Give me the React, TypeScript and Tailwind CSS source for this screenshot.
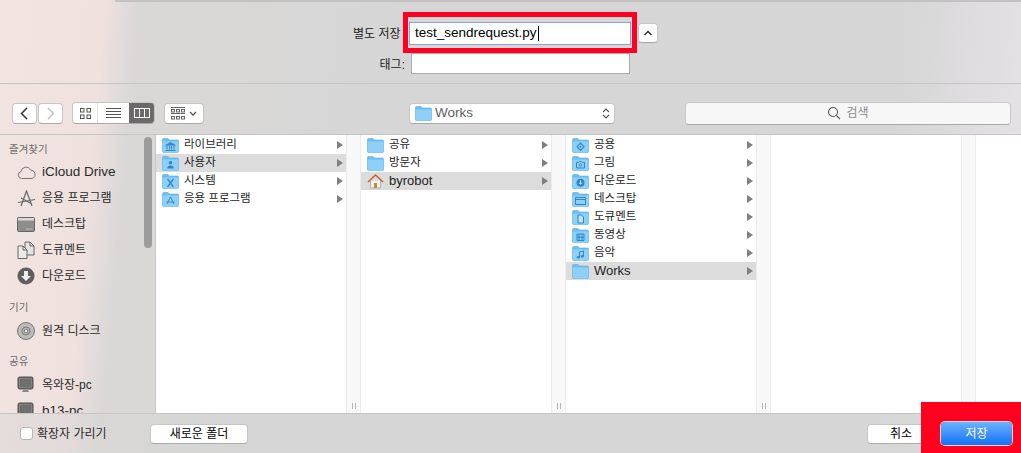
import { ReactNode } from 'react'

const FONT = "font-['Helvetica_Neue','Liberation_Sans','Noto_Sans_CJK_KR',sans-serif]"

function Chevron() {
  return <div className="ml-auto h-0 w-0 border-y-[4px] border-l-[6px] border-y-transparent border-l-[#7f7f7f]" />
}

function Folder({ glyph }: { glyph?: ReactNode }) {
  return (
    <svg width="17" height="15" viewBox="0 0 17 15" className="shrink-0">
      <path d="M.5 1.5Q.5.5 1.5.5h4.5l1.500 1.500h8q1 0 1 1v10.500q0 1-1 1h-14q-1 0-1-1z" fill="#6dbdf0" stroke="#5aaee6" strokeWidth=".6" />
      <path d="M.8 3.5h15.400v10.200q0 .8-.8.8h-13.800q-.8 0-.8-.8z" fill="#8fd0f8" />
      {glyph}
    </svg>
  )
}

const g = '#2f86c9'
const glyphs: Record<string, ReactNode> = {
  library: (
    <g stroke={g} fill="none">
      <path d="M3.500 7.200l5-2.700 5 2.700z" fill={g} strokeWidth=".6" />
      <path d="M5 8v3.500M7.500 8v3.500M9.500 8v3.500M12 8v3.500" strokeWidth="1" />
      <path d="M3.500 12.500h10" strokeWidth="1" />
    </g>
  ),
  user: <path d="M8.500 5a1.800 1.800 0 0 1 0 3.600a1.800 1.800 0 0 1 0-3.600zM5 12.500q.5-3 3.500-3t3.500 3z" fill={g} />,
  x: <path d="M5.500 5l6 8M11.500 5l-6 8" stroke={g} strokeWidth="1.300" fill="none" />,
  app: <path d="M5 12l3.500-7 3.500 7M4.500 10h8" stroke={g} strokeWidth=".9" fill="none" />,
  public: <path d="M8.500 5l3.500 3.700-3.500 3.700-3.500-3.700zM8.500 7.500v2M7.500 8.700h2" stroke={g} strokeWidth="1.100" fill="none" />,
  photo: <path d="M4.500 6.500h2l1-1h2l1 1h2v5.500h-8zM8.500 7.700a1.300 1.300 0 1 0 .01 0" stroke={g} strokeWidth="1" fill="none" />,
  down: (
    <g>
      <circle cx="8.500" cy="8.800" r="4" fill={g} />
      <path d="M8.500 6.300v3.700M6.900 8.600l1.600 1.600 1.600-1.600" stroke="#bfe4fb" strokeWidth="1" fill="none" />
    </g>
  ),
  desk: <path d="M3.500 5.500h10v7h-10zM3.500 7.500h10" stroke={g} strokeWidth="1" fill="none" />,
  doc: <path d="M6 5h3.500l2 2v6h-5.500z" stroke={g} strokeWidth="1" fill="#bfe4fb" />,
  film: <path d="M5 6h7v6.500h-7zM7 6v6.500M10 6v6.500M5 9.200h7" stroke={g} strokeWidth="1" fill="none" />,
  music: (
    <g>
      <path d="M7.500 11V6l4-1v5" stroke={g} strokeWidth="1" fill="none" />
      <ellipse cx="6.300" cy="11.200" rx="1.500" ry="1.200" fill={g} />
      <ellipse cx="10.300" cy="10.200" rx="1.500" ry="1.200" fill={g} />
    </g>
  ),
}

function House() {
  return (
    <svg width="17" height="15" viewBox="0 0 17 15" className="shrink-0">
      <path d="M3.500 7v7h10v-7" fill="#f4f1ec" stroke="#9a9a9a" strokeWidth=".7" />
      <path d="M7 9h3v5h-3z" fill="#c98a3c" />
      <path d="M1 8l7.500-7 7.500 7" fill="none" stroke="#c4622d" strokeWidth="1.500" />
    </svg>
  )
}

function Row({ icon, label, active }: { icon: ReactNode; label: string; active?: boolean }) {
  const latin = /^[A-Za-z]/.test(label)
  return (
    <div className={`flex h-[18px] items-center pl-[6px] pr-[3px] text-[#1e1e1e] ${latin ? 'text-[13px]' : 'text-[11.500px]'} ${active ? 'bg-[#dcdcdc]' : ''}`}>
      {icon}
      <span className="ml-[5px]">{label}</span>
      <Chevron />
    </div>
  )
}

function Column({ children }: { children?: ReactNode }) {
  return (
    <div className="flex w-[205px] shrink-0">
      <div className="w-[190px] shrink-0 bg-white pt-px">{children}</div>
      <div className="flex flex-1 items-end justify-center border-x border-[#ececec] bg-[#f8f8f8] pb-[4px]">
        <div className="h-[6px] w-[4px] border-x border-[#b5b5b5]" />
      </div>
    </div>
  )
}

function SideHead({ label, className }: { label: string; className: string }) {
  return <div className={`pl-[9px] text-[10.500px] leading-[14px] text-[#6e6a6a] ${className}`}>{label}</div>
}

function SideItem({ icon, label }: { icon: ReactNode; label: string }) {
  const latin = /^[A-Za-z]/.test(label)
  return (
    <div className={`flex h-[26px] items-center pl-[17px] text-[#2a2a2a] ${latin ? 'text-[13.500px]' : 'text-[12px]'}`}>
      <div className="flex w-[25px] shrink-0 items-center">{icon}</div>
      <span className="whitespace-nowrap">{label}</span>
    </div>
  )
}

function Monitor() {
  return (
    <svg width="18" height="18" viewBox="0 0 18 18">
      <rect x="1" y="1" width="15" height="12" rx="1.500" fill="#666" stroke="#555" />
      <rect x="2.500" y="2.500" width="12" height="9" fill="#6f6f6f" stroke="#999" strokeWidth=".5" />
      <path d="M6 14h5l1 2h-7z" fill="#888" />
    </svg>
  )
}

const btn = 'rounded-[4px] border border-[#c6c6c6] border-b-[#a9a9a9] bg-white'

export default function App() {
  return (
    <div className={`relative h-[453px] w-[1021px] overflow-hidden bg-[linear-gradient(95deg,#f2e5e1_0%,#eee1de_10%,#dad8d7_13%,#d6d6d6_40%,#d6d6d6_85%,#e2dfe2_95%,#e8e5e9_100%)] ${FONT}`}>
      {/* Name and tags */}
      <div className="h-[84px] border-b border-[#c5c5c5]">
        <div className="ml-[115px] h-[2px] bg-[#c2c2c2]" />
        <div className="ml-[353px] mt-[21px] flex h-[20px] items-center">
          <span className="w-[49px] pt-[2px] text-[12px] text-[#222]">별도 저장</span>
          <div className="ml-[8px] flex h-[21px] w-[220px] items-center bg-white pl-[5px] text-[13.500px] text-black shadow-[0_0_0_1px_#7fa9dc]">
            test_sendrequest.py
            <div className="ml-px h-[15px] w-px bg-black" />
          </div>
          <div className={`${btn} ml-[8px] flex h-[20px] w-[20px] items-center justify-center`}>
            <svg width="10" height="6" viewBox="0 0 10 6"><path d="M1.500 5L5 1.500 8.500 5" fill="none" stroke="#333" strokeWidth="1.500" /></svg>
          </div>
        </div>
        <div className="ml-[353px] mt-[10px] flex h-[20px] items-center">
          <span className="w-[52px] pt-[3px] text-right text-[12px] text-[#222]">태그:</span>
          <div className="ml-[6px] h-[21px] w-[219px] border border-[#ababab] bg-white" />
        </div>
      </div>

      {/* Toolbar */}
      <div className="flex h-[51px] items-center border-b border-[#c5c5c5] pl-[12px] pt-[8px]">
        <div className={`${btn} flex h-[21px] w-[25px] items-center justify-center`}>
          <svg width="9" height="13" viewBox="0 0 9 13"><path d="M7 1L1.500 6.500 7 12" fill="none" stroke="#333" strokeWidth="1.500" /></svg>
        </div>
        <div className={`${btn} ml-px flex h-[21px] w-[25px] items-center justify-center`}>
          <svg width="9" height="13" viewBox="0 0 9 13"><path d="M2 1l5.500 5.500L2 12" fill="none" stroke="#c2c2c2" strokeWidth="1.500" /></svg>
        </div>
        <div className={`${btn} ml-[9px] flex h-[22px] w-[83px] overflow-hidden`}>
          <div className="flex w-[25px] items-center justify-center border-r border-[#dcdcdc]">
            <svg width="11" height="11" viewBox="0 0 11 11" fill="none" stroke="#555"><rect x=".5" y=".5" width="3.500" height="3.500" /><rect x="7" y=".5" width="3.500" height="3.500" /><rect x=".5" y="7" width="3.500" height="3.500" /><rect x="7" y="7" width="3.500" height="3.500" /></svg>
          </div>
          <div className="flex w-[31px] items-center justify-center">
            <svg width="15" height="11" viewBox="0 0 15 11" stroke="#555"><path d="M0 .5h15M0 3.500h15M0 6.500h15M0 9.500h15" /></svg>
          </div>
          <div className="flex flex-1 items-center justify-center bg-[#6b6969]">
            <svg width="16" height="10" viewBox="0 0 16 10" fill="none" stroke="#fff"><rect x=".5" y=".5" width="15" height="9" /><path d="M5.500 0v10M10.500 0v10" /></svg>
          </div>
        </div>
        <div className={`${btn} ml-[9px] flex h-[21px] w-[40px] items-center justify-center gap-[4px]`}>
          <svg width="14" height="13" viewBox="0 0 14 13" fill="none" stroke="#555" strokeWidth=".9"><path d="M0 .5h14M0 6.500h14" /><rect x=".5" y="2.500" width="3" height="2.500" /><rect x="5.500" y="2.500" width="3" height="2.500" /><rect x="10.500" y="2.500" width="3" height="2.500" /><rect x=".5" y="9.500" width="3" height="2.500" /><rect x="5.500" y="9.500" width="3" height="2.500" /><rect x="10.500" y="9.500" width="3" height="2.500" /></svg>
          <svg width="8" height="5" viewBox="0 0 8 5"><path d="M1 1l3 3 3-3" fill="none" stroke="#555" strokeWidth="1.300" /></svg>
        </div>
        <div className={`${btn} ml-[205px] flex h-[21px] w-[206px] items-center pl-[5px] pr-[4px] text-[13.500px] text-[#5f5f5f]`}>
          <Folder />
          <span className="ml-[3px]">Works</span>
          <svg className="ml-auto" width="8" height="13" viewBox="0 0 8 13" fill="none" stroke="#555" strokeWidth="1.100"><path d="M1 5l3-3 3 3M1 8l3 3 3-3" /></svg>
        </div>
        <div className="ml-[70px] flex h-[23px] w-[326px] items-center justify-center gap-[5px] rounded-[4px] border border-[#c9c9c9] border-b-[#a9a9a9] bg-[#f7f7f7] text-[12px] text-[#8a8a8a]">
          <svg width="14" height="14" viewBox="0 0 14 14" fill="none" stroke="#555" strokeWidth="1.100"><circle cx="6" cy="6" r="4.500" /><path d="M9.300 9.300L13 13" /></svg>
          검색
        </div>
      </div>

      {/* Browser */}
      <div className="flex h-[279px] border-b border-[#c5c5c5]">
        <div className="relative w-[156px] shrink-0 overflow-hidden border-r border-[#c9c9c9]">
          <div className="absolute left-[144px] top-[2px] h-[111px] w-[8px] rounded-full bg-[#9c9c9c]" />
          <SideHead label="즐겨찾기" className="pt-[7px]" />
          <div className="mt-[3px]">
            <SideItem label="iCloud Drive" icon={<svg width="19" height="15" viewBox="0 0 19 15"><path d="M4.500 13.500a3.500 3.500 0 0 1-.5-6.900 5 5 0 0 1 9.500-1.500 4.300 4.300 0 0 1 1.500 8.400z" fill="none" stroke="#777" /></svg>} />
            <SideItem label="응용 프로그램" icon={<svg width="19" height="17" viewBox="0 0 19 17" fill="none" stroke="#666" strokeWidth="1.200"><path d="M4 16l5.500-15L15 16M1 12.500l17-3M4 8l11 6" /></svg>} />
            <SideItem label="데스크탑" icon={<svg width="18" height="15" viewBox="0 0 18 15"><rect x=".5" y=".5" width="17" height="14" rx="1" fill="#8f8d8d" stroke="#666" /><rect x="1" y="1" width="16" height="2.500" fill="#dcd8d8" /><path d="M9.500 11.500h1v1h-1zM11.500 11.500h1v1h-1zM13.500 11.500h1v1h-1z" fill="#eee" /></svg>} />
            <SideItem label="도큐멘트" icon={<svg width="18" height="18" viewBox="0 0 18 18" stroke="#666"><path d="M8 1h5l4 4v9h-9z" fill="#e8e3e3" /><path d="M13 1v4h4" fill="none" /><path d="M1 5h5l4 4v8.500h-9z" fill="#eee9e9" /><path d="M6 5v4h4" fill="none" /></svg>} />
            <SideItem label="다운로드" icon={<svg width="18" height="18" viewBox="0 0 18 18"><circle cx="9" cy="9" r="8.500" fill="#5f5f5f" /><path d="M7 4h4v5h3l-5 5-5-5h3z" fill="#eee" /></svg>} />
          </div>
          <SideHead label="기기" className="pt-[11px]" />
          <div className="mt-[4px]">
            <SideItem label="원격 디스크" icon={<svg width="18" height="18" viewBox="0 0 18 18"><circle cx="9" cy="9" r="8.500" fill="#bdbaba" stroke="#777" /><circle cx="9" cy="9" r="4" fill="none" stroke="#777" /><circle cx="9" cy="9" r="1.800" fill="#eee" stroke="#777" /></svg>} />
          </div>
          <SideHead label="공유" className="pt-[10px]" />
          <div className="mt-[4px]">
            <SideItem label="옥와장-pc" icon={<Monitor />} />
            <SideItem label="b13-pc" icon={<Monitor />} />
          </div>
        </div>

        <Column>
          <Row icon={<Folder glyph={glyphs.library} />} label="라이브러리" />
          <Row icon={<Folder glyph={glyphs.user} />} label="사용자" active />
          <Row icon={<Folder glyph={glyphs.x} />} label="시스템" />
          <Row icon={<Folder glyph={glyphs.app} />} label="응용 프로그램" />
        </Column>
        <Column>
          <Row icon={<Folder />} label="공유" />
          <Row icon={<Folder />} label="방문자" />
          <Row icon={<House />} label="byrobot" active />
        </Column>
        <Column>
          <Row icon={<Folder glyph={glyphs.public} />} label="공용" />
          <Row icon={<Folder glyph={glyphs.photo} />} label="그림" />
          <Row icon={<Folder glyph={glyphs.down} />} label="다운로드" />
          <Row icon={<Folder glyph={glyphs.desk} />} label="데스크탑" />
          <Row icon={<Folder glyph={glyphs.doc} />} label="도큐멘트" />
          <Row icon={<Folder glyph={glyphs.film} />} label="동영상" />
          <Row icon={<Folder glyph={glyphs.music} />} label="음악" />
          <Row icon={<Folder />} label="Works" active />
        </Column>
        <Column />
        <div className="flex-1 bg-white" />
      </div>

      {/* Bottom bar */}
      <div className="flex h-[39px] items-center bg-[#d6d6d6]/50 pl-[20px] text-[12px]">
        <div className="h-[13px] w-[13px] rounded-[3px] border border-[#b5b5b5] bg-white" />
        <span className="ml-[4px] w-[113px] pt-px text-[#2a2a2a]">확장자 가리기</span>
        <div className={`${btn} flex h-[20px] w-[98px] items-center justify-center text-black`}>새로운 폴더</div>
        <div className={`${btn} ml-[619px] flex h-[20px] w-[68px] items-center justify-center text-black`}>취소</div>
        <div className="relative z-10 ml-[6px] flex h-[23px] w-[71px] items-center justify-center rounded-[4px] bg-[linear-gradient(#6cb3fb,#1371f5)] text-white shadow-[0_0_0_1px_#d8d8d8]">저장</div>
      </div>

      {/* Red annotations */}
      <div className="absolute left-[403px] top-[12px] h-[41px] w-[234px] border-[5px] border-[#ff0021]" />
      <div className="absolute left-[921px] top-[402px] h-[51px] w-[100px] bg-[#ff0021]" />
    </div>
  )
}
